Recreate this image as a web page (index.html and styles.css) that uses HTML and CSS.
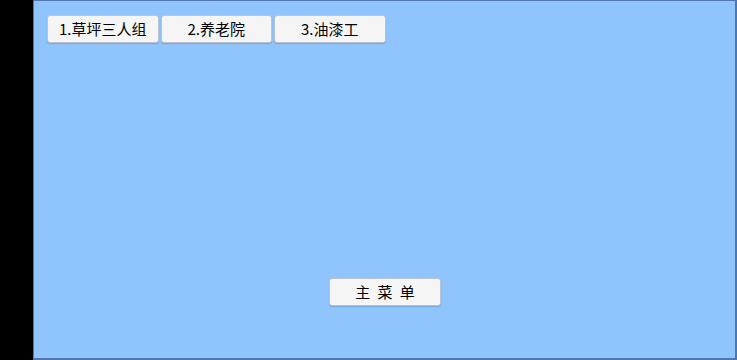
FILE: index.html
```html
<!DOCTYPE html>
<html lang="zh">
<head>
<meta charset="utf-8">
<link rel="stylesheet" href="styles.css">
</head>
<body>
<div class="screen">
  <div class="side"></div>
  <div class="panel">
    <div class="tabs">
      <button class="btn">1.草坪三人组</button>
      <button class="btn">2.养老院</button>
      <button class="btn">3.油漆工</button>
    </div>
    <div class="footer">
      <button class="btn btn-main">主 菜 单</button>
    </div>
  </div>
</div>
</body>
</html>
```
FILE: styles.css
```css
html, body {
  margin: 0;
  padding: 0;
  background: #000;
}
.screen {
  display: flex;
  width: 737px;
  height: 360px;
}
.side {
  width: 33px;
  flex: none;
  background: #000;
}
.panel {
  flex: 1;
  display: flex;
  flex-direction: column;
  background: #90c4fc;
  border: 1px solid #4f76ad;
  border-right-width: 2px;
  border-bottom-width: 2px;
  box-sizing: border-box;
  padding: 14px 0 52px 13px;
}
.tabs {
  display: flex;
  gap: 2px;
}
.btn {
  width: 111.5px;
  height: 28px;
  box-sizing: border-box;
  background: #f5f5f5;
  border: 1px solid #b9c3d2;
  border-radius: 3px;
  box-shadow: 0 1px 1px rgba(40, 70, 120, 0.25);
  font-family: "Noto Sans CJK SC", "Noto Sans", sans-serif;
  font-size: 15px;
  color: #000;
  padding: 0;
  line-height: 26px;
  text-align: center;
}
.footer {
  margin-top: auto;
  display: flex;
  justify-content: center;
  padding-right: 12px;
}
.btn-main {
  width: 112px;
  word-spacing: 4px;
}
```
